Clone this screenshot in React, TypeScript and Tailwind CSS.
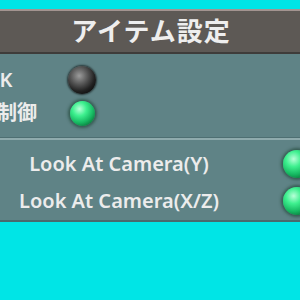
const font = { fontFamily: '"Noto Sans", "Noto Sans CJK JP", sans-serif' };

function Lamp({ on, size = 25 }: { on: boolean; size?: number }) {
  return on ? (
    <div
      className="rounded-full shrink-0 bg-[radial-gradient(circle_at_38%_32%,#b8ffd8_0%,#3ef08f_30%,#16b861_60%,#0a6d36_85%)] shadow-[0_0_3px_2px_rgba(20,60,40,0.55)]"
      style={{ width: size, height: size }}
    />
  ) : (
    <div className="w-[28px] h-[28px] rounded-full shrink-0 bg-[radial-gradient(circle_at_40%_35%,#9c9c9c_0%,#555_35%,#222_62%,#111_78%,#7d7d7d_100%)] shadow-[0_0_2px_1px_rgba(0,0,0,0.6)]" />
  );
}

export default function App() {
  return (
    <div className="w-[300px] h-[300px] bg-[#00e5e6] overflow-hidden pt-[9px]" style={font}>
      <div className="h-[45px] bg-[#5d5955] border-t-2 border-[#a39490] border-b-2 border-b-[#3e3c3a] flex items-center justify-center">
        <span className="text-[26px] font-semibold text-[#eeeeee] tracking-[1px] ml-[2px]">アイテム設定</span>
      </div>
      <div className="bg-[#5f8386] h-[84px] pt-[9px] border-b border-[#4e6f72]">
        <div className="flex items-center h-[33px]">
          <span className="w-[68px] shrink-0 -ml-[48px] text-[20px] font-semibold text-[#ececec] whitespace-nowrap">
            <span className="inline-block w-[116px]">視線IK</span>
          </span>
          <div className="ml-[48px]"><Lamp on={false} /></div>
        </div>
        <div className="flex items-center h-[34px]">
          <span className="w-[68px] shrink-0 -ml-[43px] text-[20px] font-semibold text-[#ececec] whitespace-nowrap">
            <span className="inline-block w-[111px]">物理制御</span>
          </span>
          <div className="ml-[45px]"><Lamp on={true} /></div>
        </div>
      </div>
      <div className="h-[2px] bg-[#8fabad]" />
      <div className="bg-[#5f8386] h-[82px] pt-[5px] border-b-2 border-[#4a6a6d]">
        <div className="flex items-center h-[37px]">
          <span className="w-[238px] shrink-0 text-center text-[20px] font-semibold text-[#ececec] whitespace-nowrap">Look At Camera(Y)</span>
          <div className="ml-[45px]"><Lamp on={true} size={28} /></div>
        </div>
        <div className="flex items-center h-[37px]">
          <span className="w-[238px] shrink-0 text-center text-[20px] font-semibold text-[#ececec] whitespace-nowrap">Look At Camera(X/Z)</span>
          <div className="ml-[45px]"><Lamp on={true} size={28} /></div>
        </div>
      </div>
    </div>
  );
}
